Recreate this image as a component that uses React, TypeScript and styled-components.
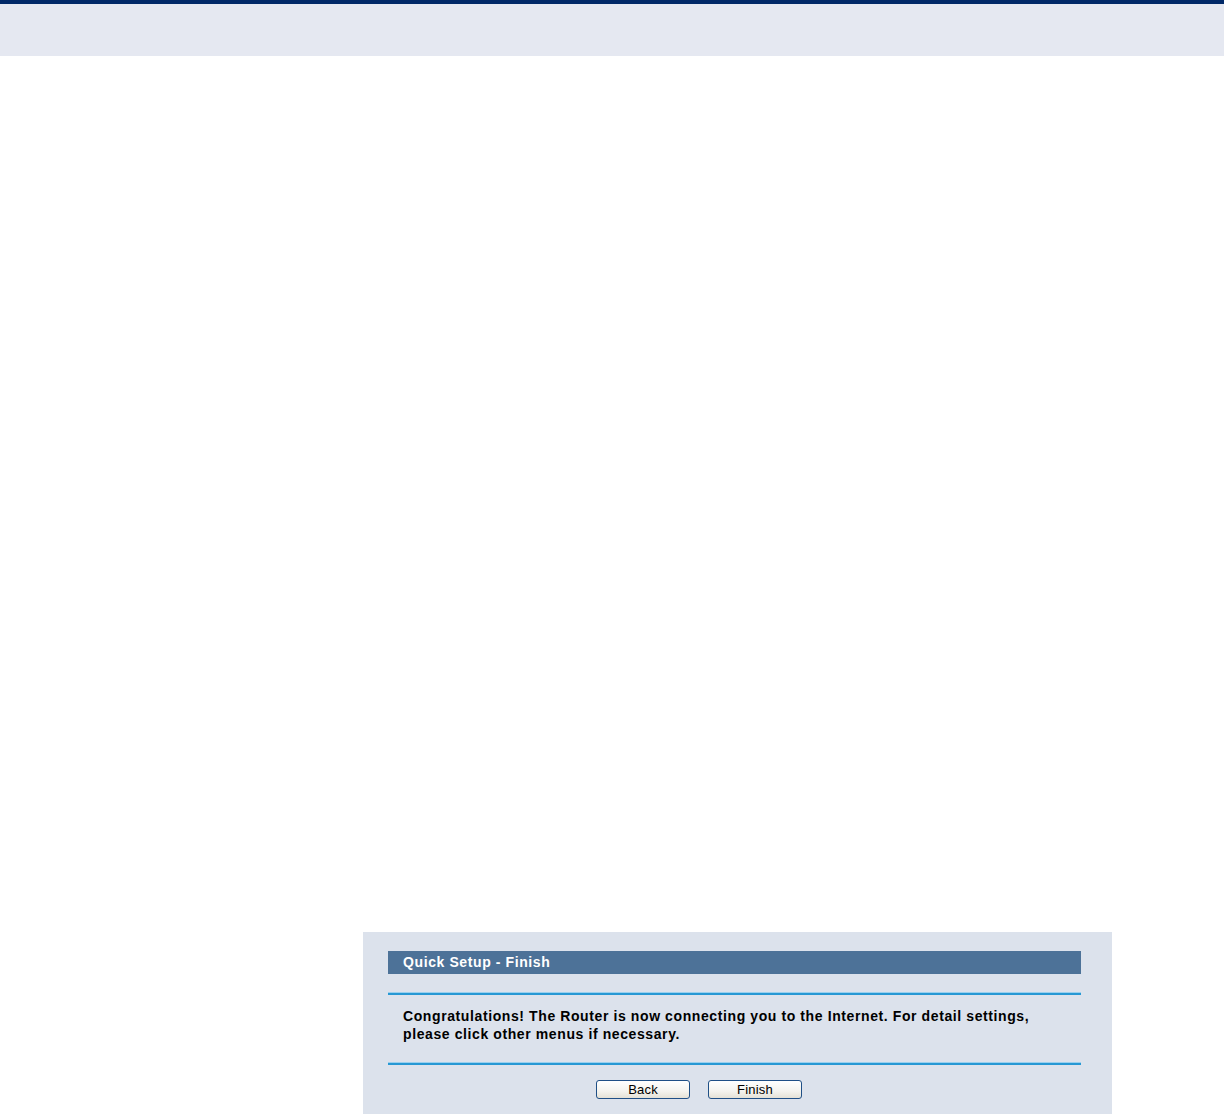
import React from "react";
import styled, { createGlobalStyle } from "styled-components";

const GlobalStyle = createGlobalStyle`
  html, body {
    margin: 0;
    padding: 0;
    background: #ffffff;
    font-family: "Liberation Sans", Arial, sans-serif;
  }
`;

const TopBand = styled.div`
  height: 52px;
  background: #e5e8f1;
  border-top: 4px solid #002868;
`;

const Page = styled.div`
  padding: 876px 0 0 363px;
`;

const Panel = styled.div`
  width: 749px;
  box-sizing: border-box;
  background: #dce2ec;
  padding: 19px 31px 15px 25px;
`;

const Header = styled.div`
  height: 23px;
  background: #4d7298;
  color: #ffffff;
  font-size: 14px;
  font-weight: bold;
  letter-spacing: 0.6px;
  line-height: 23px;
  padding-left: 15px;
`;

const Rule = styled.div<{ $top: number }>`
  margin-top: ${(p) => p.$top}px;
  height: 3px;
  background: #2798d4;
  border-top: 1px solid #9bd0ee;
  box-sizing: border-box;
`;

const Message = styled.p`
  margin: 12px 0 0;
  padding: 0 15px;
  font-size: 14px;
  font-weight: bold;
  letter-spacing: 0.6px;
  line-height: 18px;
  color: #000000;
`;

const Buttons = styled.div`
  display: flex;
  gap: 18px;
  margin-top: 15px;
  padding-left: 208px;
`;

const Button = styled.button`
  width: 94px;
  height: 19px;
  padding: 0;
  border: 1px solid #1f4f86;
  border-radius: 3px;
  background: linear-gradient(#ffffff, #f4f3ee 60%, #e4e1d6);
  font-family: "Liberation Sans", Arial, sans-serif;
  font-size: 13px;
  letter-spacing: 0.2px;
  color: #000000;
  line-height: 17px;
  cursor: pointer;
`;

export default function App() {
  return (
    <>
      <GlobalStyle />
      <TopBand />
      <Page>
        <Panel>
          <Header>Quick Setup - Finish</Header>
          <Rule $top={18} />
          <Message>
            Congratulations! The Router is now connecting you to the Internet. For detail settings,
            <br />
            please click other menus if necessary.
          </Message>
          <Rule $top={19} />
          <Buttons>
            <Button>Back</Button>
            <Button>Finish</Button>
          </Buttons>
        </Panel>
      </Page>
    </>
  );
}
